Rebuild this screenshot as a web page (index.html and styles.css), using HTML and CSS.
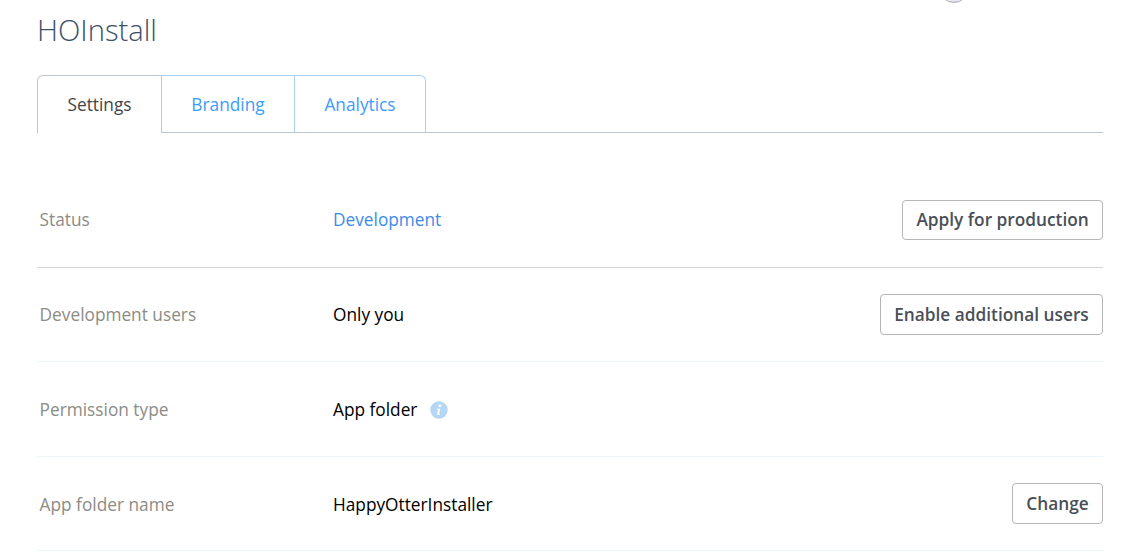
FILE: index.html
```html
<!DOCTYPE html>
<html lang="en">
<head>
    <title>HOInstall - Settings</title>
    <link rel="stylesheet" href="styles.css">
</head>
<body>
    <div class="avatar"></div>
    <div class="page">
        <h1 class="app-title">HOInstall</h1>
        <div class="tabs">
            <a href="#" class="tab active">Settings</a>
            <a href="#" class="tab">Branding</a>
            <a href="#" class="tab last">Analytics</a>
        </div>
        <div class="settings">
            <div class="row first">
                <div class="label">Status</div>
                <div class="value link">Development</div>
                <button class="button">Apply for production</button>
            </div>
            <div class="row">
                <div class="label">Development users</div>
                <div class="value">Only you</div>
                <button class="button">Enable additional users</button>
            </div>
            <div class="row">
                <div class="label">Permission type</div>
                <div class="value">App folder
                    <svg class="info" width="18" height="18" viewBox="0 0 18 18">
                        <circle cx="9" cy="9" r="8.7" fill="#b5d6f5"/>
                        <circle cx="9.9" cy="4.9" r="1.4" fill="#fff"/>
                        <path d="M7.2 7.7h3.1l-1.2 5h1.1l-.3 1.1H6.9l1.2-5H7z" fill="#fff"/>
                    </svg>
                </div>
            </div>
            <div class="row">
                <div class="label">App folder name</div>
                <div class="value">HappyOtterInstaller</div>
                <button class="button">Change</button>
            </div>
        </div>
    </div>
</body>
</html>
```

FILE: styles.css
```css
html, body {
    height: 100%;
    overflow: hidden;
}
body {
    font-family: 'Open Sans', sans-serif;
    margin: 0;
    padding: 0;
    background: #fff;
    color: #000;
}
.page {
    width: 1066px;
    margin-left: 37px;
}
.avatar {
    position: absolute;
    left: 939px;
    top: -27px;
    width: 28px;
    height: 28px;
    border: 1px solid #a9a9bb;
    border-radius: 50%;
    background: #e6e6f0;
}
.app-title {
    font-size: 29.2px;
    font-weight: 300;
    line-height: 40px;
    color: #3d5068;
    margin: 0;
    padding-top: 10px;
}
.tabs {
    display: flex;
    margin-top: 25px;
    border-bottom: 1px solid #bfc5cc;
    height: 57px;
}
.tab {
    font-size: 17.28px;
    line-height: 58px;
    height: 58px;
    box-sizing: border-box;
    color: #3d9bfa;
    text-decoration: none;
    text-align: center;
    border-top: 1px solid #a9d0f5;
    border-right: 1px solid #a9d0f5;
    border-bottom: 1px solid #bfc5cc;
}
.tab:nth-child(2) {
    width: 133px;
}
.tab.active {
    width: 125px;
    color: #444;
    border: 1px solid #bfc5cc;
    border-bottom: none;
    border-top-left-radius: 6px;
    background: #fff;
}
.tab.last {
    width: 131px;
    border-top-right-radius: 6px;
}
.settings {
    margin-top: 40px;
}
.row {
    display: flex;
    align-items: center;
    height: 94.6px;
    box-sizing: border-box;
    border-bottom: 1px solid #eef6fd;
}
.row.first {
    border-bottom: 1px solid #d4d4d4;
}
.label {
    width: 296px;
    padding-left: 2.6px;
    padding-top: 1px;
    box-sizing: border-box;
    font-size: 17.28px;
    color: #8c8c85;
}
.value {
    flex: 1;
    padding-top: 1px;
    font-size: 17.28px;
    display: flex;
    align-items: center;
}
.first .label, .first .value {
    padding-top: 0;
}
.link {
    color: #3d8bea;
}
.info {
    margin-left: 12.5px;
    margin-top: 1px;
}
.button {
    font-family: 'Open Sans', sans-serif;
    font-size: 17.28px;
    font-weight: 600;
    color: #4a4f57;
    background: #fff;
    border: 1px solid #b5b5b5;
    border-radius: 4px;
    height: 41px;
    padding: 0 13.25px;
    cursor: pointer;
}
.first .button {
    height: 40px;
}
```
